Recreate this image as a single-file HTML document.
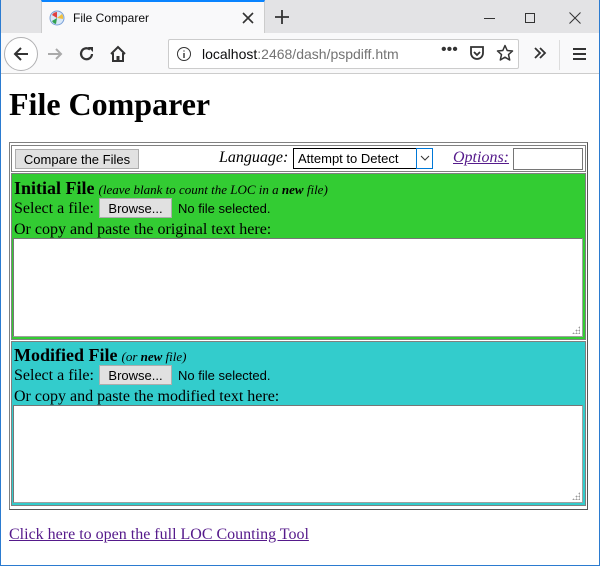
<!DOCTYPE html>
<html><head><meta charset="utf-8"><style>
*{box-sizing:border-box;margin:0;padding:0}
body{width:600px;height:566px;position:relative;overflow:hidden;background:#fff;font-family:"Liberation Serif",serif}
.a{position:absolute}
.ui{font-family:"Liberation Sans",sans-serif}
.btn{position:absolute;background:#e1e1e1;border:1px solid #adadad;font:13px "Liberation Sans",sans-serif;color:#000;text-align:center;line-height:19px}
.ta{position:absolute;background:#fff;border:1px solid #767676;border-right-color:#a0a0a0;border-bottom-color:#a0a0a0}
.grip{position:absolute;right:2px;bottom:2px;width:8px;height:8px;background:radial-gradient(circle,#999 0.8px,transparent 1px) 0 0/3px 3px;clip-path:polygon(100% 0,100% 100%,0 100%)}
</style></head><body>
<div class="a" style="left:0;top:0;width:600px;height:566px;border:1px solid #2b7bd0;border-top:none"></div>
<div class="a" style="left:1px;top:0;width:598px;height:33px;background:#e3e3e5"></div>
<div class="a" style="left:41px;top:0;width:224px;height:34px;background:#f9f9fa;border-top:2px solid #0a84ff;border-left:1px solid #ccc;border-right:1px solid #ccc"></div>
<svg class="a" style="left:49px;top:10px" width="16" height="16" viewBox="0 0 16 16"><circle cx="8" cy="8" r="7" fill="#d8e8f8" stroke="#7aa0d8"/><path d="M8 8L3 5A6 6 0 0 1 8 2Z" fill="#e04040"/><path d="M8 8L3 11A6 6 0 0 0 7 14Z" fill="#30a050"/><path d="M8 8L13 4A6 6 0 0 1 14 9Z" fill="#f0c040"/></svg>
<div class="a ui" style="left:73px;top:11px;font-size:12px;color:#0c0c0d">File Comparer</div>
<svg class="a" style="left:242px;top:12px" width="12" height="12" viewBox="0 0 12 12"><path d="M1 1L11 11M11 1L1 11" stroke="#333" stroke-width="1.6"/></svg>
<svg class="a" style="left:275px;top:10px" width="14" height="14" viewBox="0 0 14 14"><path d="M7 0V14M0 7H14" stroke="#333" stroke-width="1.8"/></svg>
<div class="a" style="left:484px;top:18px;width:11px;height:1px;background:#333"></div>
<div class="a" style="left:525px;top:13px;width:10px;height:10px;border:1px solid #333"></div>
<svg class="a" style="left:569px;top:12px" width="12" height="12" viewBox="0 0 12 12"><path d="M0.5 0.5L11.5 11.5M11.5 0.5L0.5 11.5" stroke="#333" stroke-width="1"/></svg>
<div class="a" style="left:1px;top:33px;width:598px;height:41px;background:#f9f9fa;border-bottom:1px solid #ccc"></div>
<div class="a" style="left:4px;top:37px;width:34px;height:34px;border:1px solid #b1b1b3;border-radius:50%;background:#fff"></div>
<svg class="a" style="left:12px;top:45px" width="18" height="18" viewBox="0 0 18 18"><path d="M16 9H3M9 3L3 9L9 15" stroke="#333" stroke-width="2" fill="none"/></svg>
<svg class="a" style="left:46px;top:46px" width="18" height="16" viewBox="0 0 18 16"><path d="M2 8H15M10 3L15 8L10 13" stroke="#aaa" stroke-width="2" fill="none"/></svg>
<svg class="a" style="left:78px;top:45px" width="18" height="18" viewBox="0 0 18 18"><path d="M14 9A5.5 5.5 0 1 1 12 4.5" stroke="#333" stroke-width="2.2" fill="none"/><path d="M10 2H15V7Z" fill="#333"/></svg>
<svg class="a" style="left:109px;top:45px" width="18" height="18" viewBox="0 0 18 18"><path d="M2 9L9 2L16 9M4 8V16H14V8" stroke="#333" stroke-width="2" fill="none"/><rect x="7.5" y="11" width="3" height="5" fill="#333"/></svg>
<div class="a" style="left:168px;top:39px;width:351px;height:30px;background:#fff;border:1px solid #ccc;border-radius:2px"></div>
<svg class="a" style="left:176px;top:46px" width="16" height="16" viewBox="0 0 16 16"><circle cx="8" cy="8" r="6.5" stroke="#333" fill="none"/><path d="M8 7V12M8 4.5V5.5" stroke="#333" stroke-width="1.4"/></svg>
<div class="a ui" style="left:202px;top:46px;font-size:14px;color:#0c0c0d">localhost<span style="color:#737373">:2468/dash/pspdiff.htm</span></div>
<div class="a ui" style="left:441px;top:41px;font-size:16px;color:#333">•••</div>
<svg class="a" style="left:469px;top:45px" width="16" height="17" viewBox="0 0 16 17"><path d="M2 2H14V8A6 6 0 0 1 2 8Z" stroke="#333" stroke-width="1.8" fill="none"/><path d="M5 7L8 10L11 7" stroke="#333" stroke-width="1.8" fill="none"/></svg>
<svg class="a" style="left:496px;top:44px" width="18" height="18" viewBox="0 0 18 18"><path d="M9 1.5L11.2 6.5L16.5 7L12.5 10.6L13.7 16L9 13.2L4.3 16L5.5 10.6L1.5 7L6.8 6.5Z" stroke="#333" stroke-width="1.5" fill="none" stroke-linejoin="round"/></svg>
<svg class="a" style="left:533px;top:47px" width="14" height="12" viewBox="0 0 14 12"><path d="M2 1L7 6L2 11M7 1L12 6L7 11" stroke="#333" stroke-width="1.8" fill="none"/></svg>
<div class="a" style="left:559px;top:40px;width:1px;height:30px;background:#ddd"></div>
<div class="a" style="left:573px;top:48px;width:13px;height:2px;background:#333;box-shadow:0 5px 0 #333,0 10px 0 #333"></div>
<div class="a" style="left:9px;top:85px;font-size:32px;font-weight:bold;line-height:38px">File Comparer</div>
<div class="a" style="left:9px;top:142px;width:579px;height:368px;border:1px solid #808080;border-right-color:#555;border-bottom-color:#555"></div>
<div class="a" style="left:11px;top:145px;width:575px;height:27px;border:1px solid #808080"></div>
<div class="btn" style="left:15px;top:149px;width:124px;height:20px">Compare the Files</div>
<div class="a" style="left:219px;top:149px;font-size:16px;font-style:italic">Language:</div>
<div class="a ui" style="left:293px;top:148px;width:140px;height:21px;border:1px solid #000;border-right:none;background:#fff;font-size:13px;padding:2px 0 0 4px">Attempt to Detect</div>
<div class="a" style="left:416px;top:148px;width:17px;height:21px;border:1px solid #0078d7;background:#fff"></div>
<svg class="a" style="left:420px;top:155px" width="10" height="7" viewBox="0 0 10 7"><path d="M1 1L5 5L9 1" stroke="#333" fill="none"/></svg>
<div class="a" style="left:453px;top:149px;font-size:16px;font-style:italic;color:#551a8b;text-decoration:underline">Options:</div>
<div class="a" style="left:513px;top:148px;width:70px;height:22px;border:1px solid #767676;background:#fff"></div>
<div class="a" style="left:11px;top:173px;width:575px;height:167px;background:#33cc33;border:1px solid #808080"></div>
<div class="a" style="left:14px;top:178px;font-size:16px;line-height:20px"><b style="font-size:18px">Initial File</b> <i style="font-size:13px">(leave blank to count the LOC in a <b>new</b> file)</i></div>
<div class="a" style="left:14px;top:200px;font-size:16px">Select a file:</div>
<div class="btn" style="left:99px;top:198px;width:73px;height:20px">Browse...</div>
<div class="a ui" style="left:178px;top:201px;font-size:13px">No file selected.</div>
<div class="a" style="left:14px;top:221px;font-size:16px">Or copy and paste the original text here:</div>
<div class="ta" style="left:13px;top:238px;width:570px;height:99px"><div class="grip"></div></div>
<div class="a" style="left:11px;top:341px;width:575px;height:165px;background:#33cccc;border:1px solid #808080"></div>
<div class="a" style="left:14px;top:345px;font-size:16px;line-height:20px"><b style="font-size:18px">Modified File</b> <i style="font-size:13px">(or <b>new</b> file)</i></div>
<div class="a" style="left:14px;top:367px;font-size:16px">Select a file:</div>
<div class="btn" style="left:99px;top:365px;width:73px;height:20px">Browse...</div>
<div class="a ui" style="left:178px;top:368px;font-size:13px">No file selected.</div>
<div class="a" style="left:14px;top:388px;font-size:16px">Or copy and paste the modified text here:</div>
<div class="ta" style="left:13px;top:405px;width:570px;height:98px"><div class="grip"></div></div>
<div class="a" style="left:9px;top:526px;font-size:16px;color:#551a8b;text-decoration:underline">Click here to open the full LOC Counting Tool</div>
</body></html>
